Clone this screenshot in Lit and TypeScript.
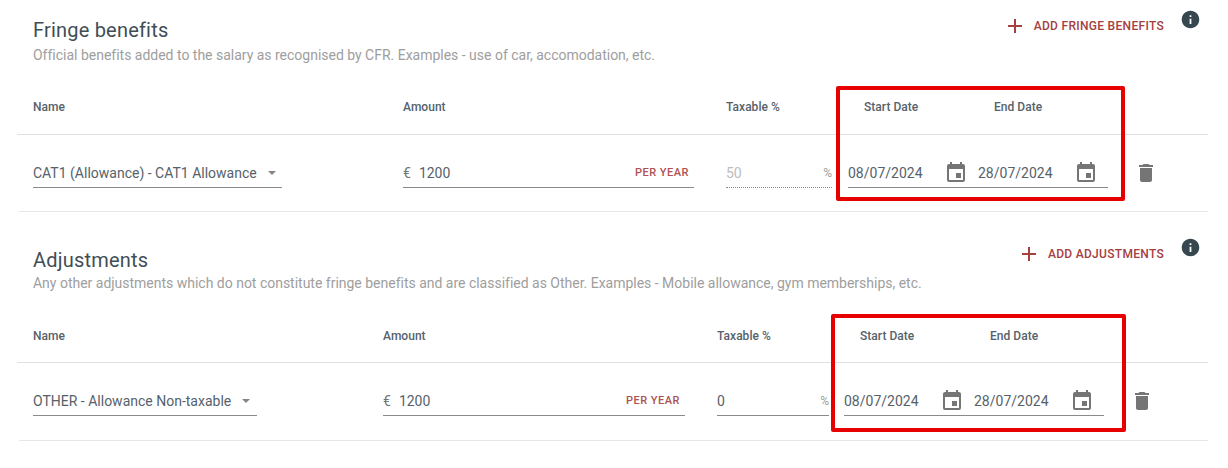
import { LitElement, html, css, svg } from "lit";
import { customElement } from "lit/decorators.js";

const icon = (d: any, cls: string) => html`<svg class=${cls} viewBox="0 0 24 24" fill="currentColor">${svg`<path d=${d}></path>`}</svg>`;
const ADD = "M19 13h-6v6h-2v-6H5v-2h6V5h2v6h6v2z";
const INFO = "M12 2C6.48 2 2 6.48 2 12s4.48 10 10 10 10-4.48 10-10S17.52 2 12 2zm1 15h-2v-6h2v6zm0-8h-2V7h2v2z";
const EVENT = "M17 12h-5v5h5v-5zM16 1v2H8V1H6v2H5c-1.11 0-1.99.9-1.99 2L3 19c0 1.1.89 2 2 2h14c1.1 0 2-.9 2-2V5c0-1.1-.9-2-2-2h-1V1h-2zm3 18H5V8h14v11z";
const TRASH = "M6 19c0 1.1.9 2 2 2h8c1.1 0 2-.9 2-2V7H6v12zM19 4h-3.5l-1-1h-5l-1 1H5v2h14V4z";

interface Sec {
  cls: string; title: string; sub: string; add: string; option: string; tax: string; disabled: boolean;
}
const SECTIONS: Sec[] = [
  { cls: "fringe", title: "Fringe benefits", sub: "Official benefits added to the salary as recognised by CFR. Examples - use of car, accomodation, etc.", add: "ADD FRINGE BENEFITS", option: "CAT1 (Allowance) - CAT1 Allowance", tax: "50", disabled: true },
  { cls: "adjust", title: "Adjustments", sub: "Any other adjustments which do not constitute fringe benefits and are classified as Other. Examples - Mobile allowance, gym memberships, etc.", add: "ADD ADJUSTMENTS", option: "OTHER - Allowance Non-taxable", tax: "0", disabled: false },
];

@customElement("app-root")
export class AppRoot extends LitElement {
  static styles = css`
    :host { display: block; width: 1228px; height: 468px; overflow: hidden; background: #fff; font-family: Roboto, "Liberation Sans", sans-serif; color: #56626a; }
    .section { position: relative; margin: 0 20px 0 17px; }
    .fringe { padding-top: 18px; }
    .adjust { padding-top: 36px; }
    .top { display: flex; justify-content: space-between; padding-left: 16px; height: 55px; }
    .adjust .top { height: 46px; }
    h2 { margin: 0; font-size: 20px; font-weight: 400; line-height: 24px; color: #3f4e56; letter-spacing: 0.2px; }
    .sub { margin: 1px 0 0; font-size: 14px; line-height: 24px; color: #9e9e9e; white-space: nowrap; letter-spacing: -0.01px; }
    .adjust .sub { margin-top: -1px; }
    .actions { display: flex; align-items: flex-start; margin-top: -8px; margin-right: 7px; }
    .adjust .actions { margin-top: -10px; }
    .add { display: flex; align-items: center; gap: 7px; height: 32px; margin-right: 16px; color: #a5403f; font-size: 12px; font-weight: 500; letter-spacing: 0.3px; white-space: nowrap; }
    .add-i { width: 24px; height: 24px; }
    .info-i { width: 21px; height: 21px; color: #37474f; margin-top: -1px; }
    .grid { display: grid; align-items: center; padding-left: 16px; }
    .fringe .grid { grid-template-columns: 370px 323px 122px 260px 50px; }
    .adjust .grid { grid-template-columns: 350px 334px 127px 260px 50px; }
    .head { height: 55px; padding-top: 6px; border-bottom: 1px solid #e0e0e0; font-size: 12px; font-weight: 500; color: #56626a; letter-spacing: 0.03px; }
    .adjust .head { height: 52px; padding-top: 16px; }
    .dates-h { display: grid; grid-template-columns: 130px 130px; padding-left: 16px; }
    .row { height: 76px; border-bottom: 1px solid #e6e6e6; margin-left: 2px; padding-left: 14px; font-size: 14px; }
    .adjust .row { padding-bottom: 1px; }
    .field { display: flex; align-items: center; height: 28px; border-bottom: 1px solid #8a8a8a; white-space: nowrap; }
    .fringe .sel { width: 249px; }
    .adjust .sel { width: 224px; }
    .caret { width: 0; height: 0; margin-left: 11px; border-left: 4.5px solid transparent; border-right: 4.5px solid transparent; border-top: 4px solid #858585; }
    .sel { justify-content: flex-start; }
    .fringe .amt { width: 291px; }
    .adjust .amt { width: 302px; }
    .euro { color: #757575; margin-right: 8px; }
    .per { margin-left: auto; margin-right: 5px; color: #a5403f; font-size: 11px; font-weight: 500; letter-spacing: 0.5px; opacity: .9; }
    .tax { justify-content: space-between; }
    .fringe .tax { width: 106px; }
    .adjust .tax { width: 112px; }
    .tax.off { border-bottom: 1px dotted #8a8a8a; color: #bdbdbd; }
    .pct { color: #9e9e9e; font-size: 12px; }
    .dates { display: grid; grid-template-columns: 130px 130px; }
    .date { display: flex; align-items: center; justify-content: space-between; padding-right: 13px; }
    .cal { width: 24px; height: 24px; color: #757575; margin-right: -3px; }
    .trash { width: 24px; height: 24px; color: #757575; justify-self: end; }
    .mark { position: absolute; box-sizing: border-box; border: 4px solid #e60000; border-radius: 2px; pointer-events: none; }
    .fringe .mark { left: 819px; top: 86px; width: 289px; height: 115px; }
    .adjust .mark { left: 814px; top: 102px; width: 295px; height: 118px; }
  `;

  render() {
    return SECTIONS.map((s) => html`
      <section class="section ${s.cls}">
        <div class="top">
          <div>
            <h2>${s.title}</h2>
            <p class="sub">${s.sub}</p>
          </div>
          <div class="actions">
            <div class="add">${icon(ADD, "add-i")}<span>${s.add}</span></div>
            ${icon(INFO, "info-i")}
          </div>
        </div>
        <div class="grid head">
          <span>Name</span><span>Amount</span><span>Taxable %</span>
          <div class="dates-h"><span>Start Date</span><span>End Date</span></div>
          <span></span>
        </div>
        <div class="grid row">
          <div class="field sel"><span>${s.option}</span><span class="caret"></span></div>
          <div class="field amt"><span class="euro">€</span><span>1200</span><span class="per">PER YEAR</span></div>
          <div class="field tax ${s.disabled ? "off" : ""}"><span>${s.tax}</span><span class="pct">%</span></div>
          <div class="field dates">
            <div class="date"><span>08/07/2024</span>${icon(EVENT, "cal")}</div>
            <div class="date"><span>28/07/2024</span>${icon(EVENT, "cal")}</div>
          </div>
          ${icon(TRASH, "trash")}
        </div>
        <div class="mark"></div>
      </section>
    `);
  }
}
